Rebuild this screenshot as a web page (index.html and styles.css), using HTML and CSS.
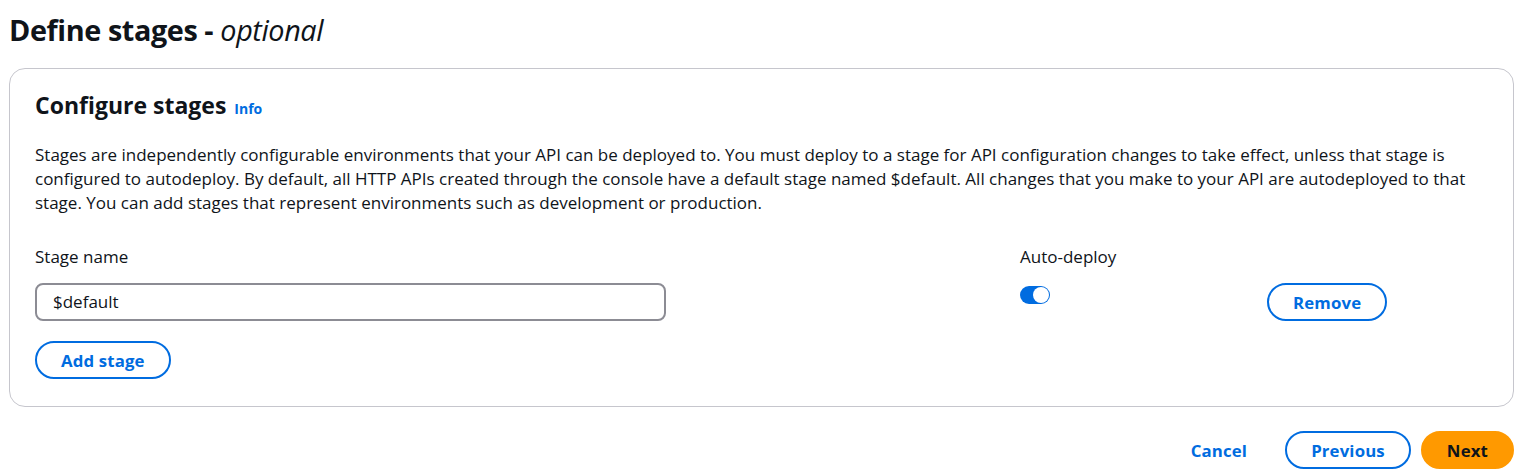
FILE: index.html
```html
<!DOCTYPE html>
<html>
<head>
<meta charset="utf-8">
<link rel="stylesheet" href="styles.css">
</head>
<body>
<div class="page">
  <h1 class="title">Define stages - <em>optional</em></h1>
  <section class="card">
    <h2 class="card-title">Configure stages <a class="info" href="#">Info</a></h2>
    <p class="desc">Stages are independently configurable environments that your API can be deployed to. You must deploy to a stage for API configuration changes to take effect, unless that stage is configured to autodeploy. By default, all HTTP APIs created through the console have a default stage named $default. All changes that you make to your API are autodeployed to that stage. You can add stages that represent environments such as development or production.</p>
    <div class="stage-row">
      <div class="field">
        <label class="label">Stage name</label>
        <div class="input">$default</div>
      </div>
      <div class="field">
        <label class="label">Auto-deploy</label>
        <div class="toggle"><span class="knob"></span></div>
      </div>
      <div class="remove-cell">
        <button class="btn">Remove</button>
      </div>
    </div>
    <button class="btn add">Add stage</button>
  </section>
  <div class="actions">
    <button class="link-btn">Cancel</button>
    <button class="btn">Previous</button>
    <button class="btn primary">Next</button>
  </div>
</div>
</body>
</html>
```

FILE: styles.css
```css
* { box-sizing: border-box; }
body {
  margin: 0;
  font-family: "Open Sans", "Noto Sans", sans-serif;
  color: #0f141a;
  background: #fff;
}
.page {
  padding: 10px 13px 0 9px;
}
.title {
  margin: 0;
  font-size: 28.8px;
  line-height: 40px;
  font-weight: 700;
  letter-spacing: -0.4px;
}
.title em { font-weight: 400; }
.card {
  margin-top: 18px;
  border: 1px solid #c6c6cd;
  border-radius: 16px;
  padding: 20px 25px 27px 25px;
}
.card-title {
  margin: 0;
  font-size: 23px;
  line-height: 32px;
  font-weight: 700;
}
.info {
  color: #006ce0;
  font-size: 14px;
  text-decoration: none;
  font-weight: 700;
  margin-left: 2px;
}
.desc {
  margin: 18px 0 0 0;
  font-size: 17px;
  line-height: 24px;
}
.stage-row {
  display: grid;
  grid-template-columns: 965px 227px auto;
  column-gap: 20px;
  margin-top: 30px;
}
.field { display: flex; flex-direction: column; }
.label {
  font-size: 17px;
  line-height: 24px;
}
.input {
  margin-top: 14px;
  width: 631px;
  height: 38px;
  border: 2px solid #8c8c94;
  border-radius: 8px;
  padding: 0 16px;
  font-size: 17px;
  line-height: 34px;
}
.toggle {
  margin-top: 17px;
  width: 30px;
  height: 18px;
  border-radius: 9px;
  background: #006ce0;
  position: relative;
}
.knob {
  position: absolute;
  right: 1px;
  top: 1px;
  width: 16px;
  height: 16px;
  border-radius: 50%;
  background: #fff;
}
.remove-cell { padding-top: 38px; }
.btn {
  font-family: inherit;
  font-size: 16.8px;
  font-weight: 700;
  letter-spacing: 0.15px;
  color: #006ce0;
  background: #fff;
  border: 2px solid #006ce0;
  border-radius: 20px;
  height: 38px;
  padding: 0 24px;
  cursor: pointer;
}
.add { margin-top: 20px; }
.actions {
  display: flex;
  justify-content: flex-end;
  align-items: center;
  gap: 10px;
  margin-top: 24px;
}
.link-btn {
  font-family: inherit;
  font-size: 16.8px;
  font-weight: 700;
  letter-spacing: 0.15px;
  color: #006ce0;
  background: none;
  border: none;
  padding: 0 24px;
  margin-right: 4px;
}
.primary {
  background: #ff9900;
  border-color: #ff9900;
  color: #0f141a;
}
```
